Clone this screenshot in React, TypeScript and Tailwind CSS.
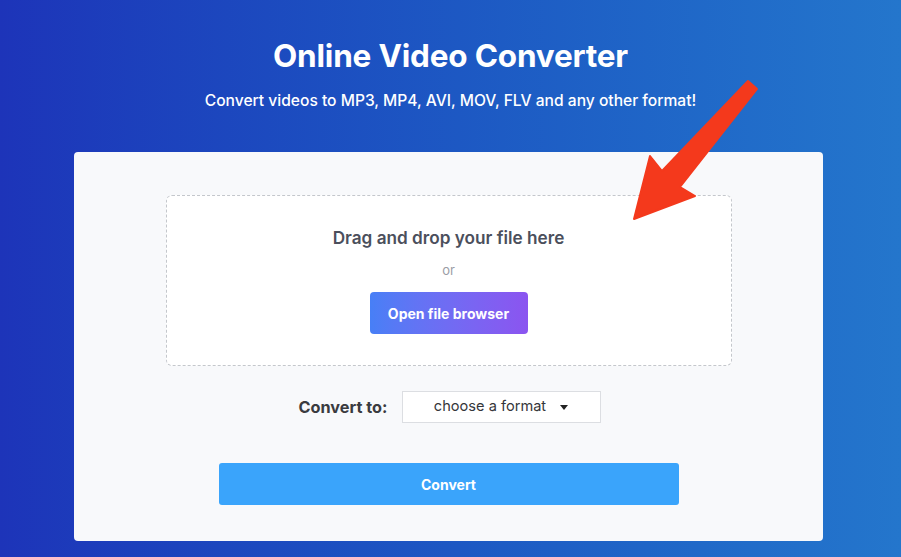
import React from 'react';

const App = () => {
  return (
    <div
      className="relative h-[557px] w-full overflow-hidden bg-gradient-to-r from-[#1d34b9] to-[#2476cc] pt-[37px]"
      style={{ fontFamily: 'Inter, "Noto Sans", sans-serif' }}
    >
      {/* Header */}
      <h1 className="text-center text-[31.5px] leading-[38px] font-bold tracking-[-0.2px] text-white">
        Online Video Converter
      </h1>
      <p className="mt-[14px] text-center text-[15.6px] leading-[24px] font-medium text-white">
        Convert videos to MP3, MP4, AVI, MOV, FLV and any other format!
      </p>

      {/* Converter card */}
      <div className="ml-[74px] mt-[39px] h-[389px] w-[749px] rounded-[4px] bg-[#f8f9fb] pt-[43px]">
        <div className="mx-auto flex h-[171px] w-[566px] flex-col items-center rounded-[6px] border border-dashed border-[#c4c7cc] bg-white pt-[31px]">
          <div className="text-[17.2px] leading-[22px] font-semibold text-[#4b4f5c]">
            Drag and drop your file here
          </div>
          <div className="mt-[12px] text-[13px] leading-[18px] text-[#9a9da5]">or</div>
          <button className="mt-[13px] h-[42px] w-[158px] rounded-[4px] bg-gradient-to-r from-[#477ff6] to-[#8b54f0] text-[14px] font-bold text-white">
            Open file browser
          </button>
        </div>

        <div className="mt-[25px] ml-[2px] flex items-center justify-center gap-[14px]">
          <span className="text-[16.3px] font-bold text-[#3a3b3f]">Convert to:</span>
          <div className="flex h-[32px] w-[199px] items-center justify-center gap-[14px] border border-[#dcdee2] bg-white text-[14.6px] text-[#35363a]">
            <span>choose a format</span>
            <svg width="8" height="5" viewBox="0 0 8 5">
              <path d="M0 0 L8 0 L4 5 Z" fill="#222" />
            </svg>
          </div>
        </div>

        <button className="mx-auto mt-[40px] flex h-[42px] w-[460px] items-center justify-center rounded-[3px] bg-[#3aa4fb] text-[14px] font-bold text-white">
          Convert
        </button>
      </div>

      {/* Red arrow annotation */}
      <svg className="pointer-events-none absolute left-0 top-0" width="901" height="557">
        <polygon
          points="748,81 757,89 680,187 695,196 634,219 650,156 662,171"
          fill="#f4391c"
          stroke="#f4391c"
          strokeWidth="2"
          strokeLinejoin="round"
        />
      </svg>
    </div>
  );
};

export default App;
